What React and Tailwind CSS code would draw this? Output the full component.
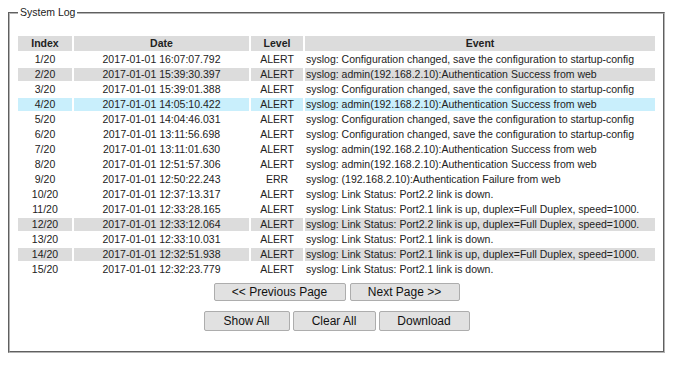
const ROWS = [
  ["1/20", "2017-01-01 16:07:07.792", "ALERT", "syslog: Configuration changed, save the configuration to startup-config", ""],
  ["2/20", "2017-01-01 15:39:30.397", "ALERT", "syslog: admin(192.168.2.10):Authentication Success from web", "grey"],
  ["3/20", "2017-01-01 15:39:01.388", "ALERT", "syslog: Configuration changed, save the configuration to startup-config", ""],
  ["4/20", "2017-01-01 14:05:10.422", "ALERT", "syslog: admin(192.168.2.10):Authentication Success from web", "cyan"],
  ["5/20", "2017-01-01 14:04:46.031", "ALERT", "syslog: Configuration changed, save the configuration to startup-config", ""],
  ["6/20", "2017-01-01 13:11:56.698", "ALERT", "syslog: Configuration changed, save the configuration to startup-config", ""],
  ["7/20", "2017-01-01 13:11:01.630", "ALERT", "syslog: admin(192.168.2.10):Authentication Success from web", ""],
  ["8/20", "2017-01-01 12:51:57.306", "ALERT", "syslog: admin(192.168.2.10):Authentication Success from web", ""],
  ["9/20", "2017-01-01 12:50:22.243", "ERR", "syslog: (192.168.2.10):Authentication Failure from web", ""],
  ["10/20", "2017-01-01 12:37:13.317", "ALERT", "syslog: Link Status: Port2.2 link is down.", ""],
  ["11/20", "2017-01-01 12:33:28.165", "ALERT", "syslog: Link Status: Port2.1 link is up, duplex=Full Duplex, speed=1000.", ""],
  ["12/20", "2017-01-01 12:33:12.064", "ALERT", "syslog: Link Status: Port2.2 link is up, duplex=Full Duplex, speed=1000.", "grey"],
  ["13/20", "2017-01-01 12:33:10.031", "ALERT", "syslog: Link Status: Port2.1 link is down.", ""],
  ["14/20", "2017-01-01 12:32:51.938", "ALERT", "syslog: Link Status: Port2.1 link is up, duplex=Full Duplex, speed=1000.", "grey"],
  ["15/20", "2017-01-01 12:32:23.779", "ALERT", "syslog: Link Status: Port2.1 link is down.", ""],
];

const ROW_BG = {
  "": "bg-white",
  grey: "bg-[#dcdcdc]",
  cyan: "bg-[#c9effc]",
};

function Btn({ children, className }) {
  return (
    <button
      type="button"
      className={`rounded-[2px] border border-[#adadad] bg-[#e1e1e1] text-[12px] leading-none text-[#111] ${className}`}
    >
      {children}
    </button>
  );
}

export default function App() {
  return (
    <div className="h-[366px] w-[675px] bg-white text-[#222]" style={{ fontFamily: '"Liberation Sans", Arial, sans-serif' }}>
      <fieldset className="ml-[8px] mt-[5px] h-[348px] w-[657px] border-2 border-[#b4b4b4] px-[6px] pt-[14px] [border-style:groove]">
        <legend className="ml-[2px] px-[2px] text-[10.5px] leading-[15px] text-[#222]">System Log</legend>

        <table className="w-[641px] border-separate border-spacing-[2px] text-[10.5px]">
          <thead>
            <tr className="bg-[#dcdcdc] font-bold">
              <th className="h-[15px] w-[54px] p-0 text-center leading-[15px]">Index</th>
              <th className="w-[175px] p-0 text-center leading-[15px]">Date</th>
              <th className="w-[52px] p-0 text-center leading-[15px]">Level</th>
              <th className="p-0 text-center leading-[15px]">Event</th>
            </tr>
          </thead>
          <tbody>
            {ROWS.map(([idx, date, level, event, tone]) => (
              <tr key={idx}>
                <td className={`h-[13px] p-0 text-center leading-[13px] ${ROW_BG[tone]}`}>{idx}</td>
                <td className={`p-0 text-center leading-[13px] ${ROW_BG[tone]}`}>{date}</td>
                <td className={`p-0 text-center leading-[13px] ${ROW_BG[tone]}`}>{level}</td>
                <td className={`whitespace-nowrap p-0 pl-[1px] text-left leading-[13px] ${ROW_BG[tone]}`}>{event}</td>
              </tr>
            ))}
          </tbody>
        </table>

        <div className="mt-[5px] flex justify-center gap-[4px]">
          <Btn className="h-[18px] w-[132px]">&lt;&lt; Previous Page</Btn>
          <Btn className="h-[18px] w-[110px]">Next Page &gt;&gt;</Btn>
        </div>
        <div className="mt-[10px] flex justify-center gap-[3px]">
          <Btn className="h-[20px] w-[86px]">Show All</Btn>
          <Btn className="h-[20px] w-[83px]">Clear All</Btn>
          <Btn className="h-[20px] w-[91px]">Download</Btn>
        </div>
      </fieldset>
    </div>
  );
}
